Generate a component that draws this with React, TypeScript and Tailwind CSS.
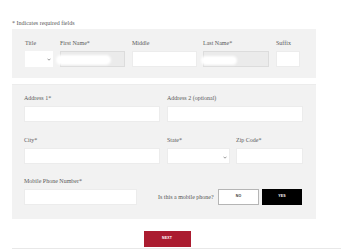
import React from "react";

const Label = ({ children, className = "" }: { children: React.ReactNode; className?: string }) => (
  <div className={`h-[6px] text-[6px] leading-[6px] text-[#5a5a5a] mb-[5px] whitespace-nowrap ${className}`}>{children}</div>
);

const Input = ({ className = "" }: { className?: string }) => (
  <div className={`h-[16px] bg-white border border-[#ececec] ${className}`} />
);

const Chevron = () => (
  <svg width="4" height="3" viewBox="0 0 4 3" className="absolute">
    <path d="M0.5 0.7 L2 2.2 L3.5 0.7" stroke="#555" strokeWidth="0.6" fill="none" />
  </svg>
);

export default function App() {
  return (
    <div className="w-[341px] h-[250px] bg-white overflow-hidden relative" style={{ fontFamily: '"Liberation Serif", "DejaVu Serif", serif' }}>
      <div className="h-[20px]" />
      <div className="pl-[12px] h-[6px] text-[6px] leading-[6px] text-[#5a5a5a]">* Indicates required fields</div>
      <div className="h-[3px]" />
      {/* Panel 1 */}
      <div className="ml-[12px] w-[304px] bg-[#f2f2f2] pt-[11px] pb-[11px] pl-[13px] flex">
        <div className="w-[28px]">
          <Label>Title</Label>
          <div className="relative h-[16px] bg-white">
            <div className="absolute left-[22px] top-[7px]"><Chevron /></div>
          </div>
        </div>
        <div className="w-[65px] ml-[7px]">
          <Label>First Name*</Label>
          <div className="relative h-[16px] bg-[#ebebeb] border border-[#dcdcdc]">
            <div className="absolute left-[-5px] top-[3px] w-[55px] h-[10px] bg-white rounded-[5px] blur-[1px]" />
          </div>
        </div>
        <div className="w-[65px] ml-[7px]">
          <Label>Middle</Label>
          <Input />
        </div>
        <div className="w-[66px] ml-[6px]">
          <Label>Last Name*</Label>
          <div className="relative h-[16px] bg-[#ebebeb] border border-[#dcdcdc]">
            <div className="absolute left-[-3px] top-[4px] w-[36px] h-[9px] bg-white rounded-[5px] blur-[1px]" />
          </div>
        </div>
        <div className="w-[24px] ml-[7px]">
          <Label>Suffix</Label>
          <Input />
        </div>
      </div>
      <div className="h-[6px]" />
      {/* Panel 2 */}
      <div className="ml-[12px] w-[304px] bg-[#f2f2f2] pt-[10px] pb-[14px] pl-[12px] pr-[13px] border-t border-[#ececec]">
        <div className="flex gap-[7px]">
          <div className="w-[136px]">
            <Label>Address 1*</Label>
            <Input />
          </div>
          <div className="w-[136px]">
            <Label>Address 2 (optional)</Label>
            <Input />
          </div>
        </div>
        <div className="flex gap-[7px] mt-[15px]">
          <div className="w-[136px]">
            <Label>City*</Label>
            <Input />
          </div>
          <div className="w-[63px]">
            <Label>State*</Label>
            <div className="relative h-[16px] bg-white border border-[#ececec]">
              <div className="absolute left-[55px] top-[7px]"><Chevron /></div>
            </div>
          </div>
          <div className="w-[67px] ml-[-1px]">
            <Label>Zip Code*</Label>
            <Input />
          </div>
        </div>
        <div className="flex mt-[14px] items-end">
          <div className="w-[113px]">
            <Label>Mobile Phone Number*</Label>
            <Input />
          </div>
          <div className="flex items-center h-[16px] ml-[21px]">
            <div className="w-[60px] text-[6px] leading-[6px] text-[#555] whitespace-nowrap">Is this a mobile phone?</div>
            <div className="w-[41px] h-[16px] bg-white border border-[#b5b5b5] flex items-center justify-center text-[3.5px] font-bold text-[#333] tracking-[0.2px]" style={{ fontFamily: '"Liberation Sans", Arial, sans-serif' }}>NO</div>
            <div className="w-[40px] h-[16px] ml-[3px] bg-black flex items-center justify-center text-[3.5px] font-bold text-white tracking-[0.2px]" style={{ fontFamily: '"Liberation Sans", Arial, sans-serif' }}>YES</div>
          </div>
        </div>
      </div>
      <div className="flex justify-center mt-[12px] ml-[-7px]">
        <div className="w-[47px] h-[16px] bg-[#ab1c30] flex items-center justify-center text-[3.5px] font-bold text-white tracking-[0.2px]" style={{ fontFamily: '"Liberation Sans", Arial, sans-serif' }}>NEXT</div>
      </div>
      <div className="ml-[12px] mt-[1px] border-t border-[#e8e8e8]" />
    </div>
  );
}
